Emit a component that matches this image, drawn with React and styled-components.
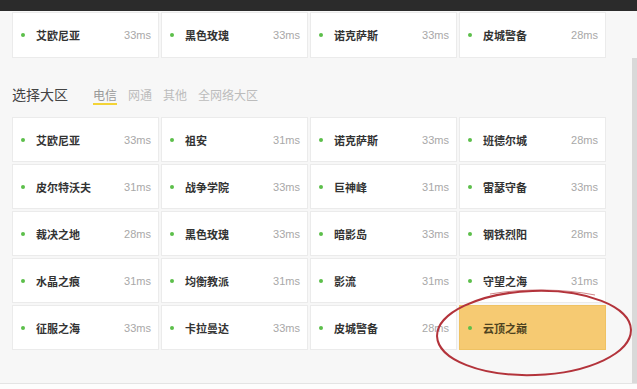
import React from "react";
import styled, { createGlobalStyle } from "styled-components";

const GlobalStyle = createGlobalStyle`
  html, body {
    margin: 0;
    padding: 0;
    background: #f7f7f7;
  }
  body {
    font-family: "Noto Sans CJK SC", "Noto Sans", sans-serif;
  }
`;

const Page = styled.div`
  position: relative;
  width: 637px;
  height: 389px;
  display: flex;
  flex-direction: column;
  overflow: hidden;
  background: #f7f7f7;
`;

const TopBar = styled.div`
  height: 11px;
  flex: none;
  background: #2b2b2b;
`;

const Main = styled.div`
  flex: 1;
  display: flex;
  min-height: 0;
`;

const Content = styled.div`
  flex: 1;
  padding: 1px 0 0 12px;
`;

const Track = styled.div`
  width: 5px;
  margin-top: 47px;
  background: #d9d9d9;
`;

const Footer = styled.div`
  height: 5px;
  flex: none;
  border-top: 1px solid #e4e4e4;
  background: #fdfdfd;
`;

const Grid = styled.div`
  display: grid;
  grid-template-columns: repeat(4, 147px);
  grid-auto-rows: ${(p) => p.$rowHeight}px;
  column-gap: 2px;
  row-gap: 2px;
`;

const Heading = styled.div`
  display: flex;
  align-items: baseline;
  margin: 26px 0 13px;
  height: 20px;
`;

const Title = styled.span`
  font-size: 14px;
  line-height: 20px;
  color: #444;
  margin-right: 25px;
`;

const Tab = styled.span`
  position: relative;
  font-size: 12px;
  line-height: 18px;
  margin-right: 11px;
  color: ${(p) => (p.$active ? "#999" : "#bcbcbc")};
  &::after {
    content: "";
    display: ${(p) => (p.$active ? "block" : "none")};
    position: absolute;
    left: 0;
    right: 0;
    bottom: -1px;
    height: 2px;
    background: #f3d336;
  }
`;

const Card = styled.div`
  display: flex;
  align-items: center;
  padding: 0 7px 0 8px;
  background: ${(p) => (p.$selected ? "#f6ca72" : "#fff")};
  border: 1px solid ${(p) => (p.$selected ? "#efc263" : "#ebebeb")};
`;

const Dot = styled.span`
  width: 4px;
  height: 4px;
  border-radius: 50%;
  background: #5cbf4a;
  flex: none;
`;

const Name = styled.span`
  flex: 1;
  margin-left: 11px;
  font-size: 11px;
  font-weight: 600;
  color: ${(p) => (p.$selected ? "#4e4220" : "#333")};
  white-space: nowrap;
`;

const Ping = styled.span`
  font-family: "Liberation Sans", Arial, sans-serif;
  font-size: 11px;
  color: #a8a8a8;
`;

const Ring = styled.svg`
  position: absolute;
  left: 430px;
  top: 285px;
  pointer-events: none;
`;

const recent = [
  ["艾欧尼亚", 33],
  ["黑色玫瑰", 33],
  ["诺克萨斯", 33],
  ["皮城警备", 28],
];

const servers = [
  ["艾欧尼亚", 33],
  ["祖安", 31],
  ["诺克萨斯", 33],
  ["班德尔城", 28],
  ["皮尔特沃夫", 31],
  ["战争学院", 33],
  ["巨神峰", 31],
  ["雷瑟守备", 33],
  ["裁决之地", 28],
  ["黑色玫瑰", 33],
  ["暗影岛", 33],
  ["钢铁烈阳", 28],
  ["水晶之痕", 31],
  ["均衡教派", 31],
  ["影流", 31],
  ["守望之海", 31],
  ["征服之海", 33],
  ["卡拉曼达", 33],
  ["皮城警备", 28],
  ["云顶之巅", null],
];

const tabs = ["电信", "网通", "其他", "全网络大区"];

function Server({ name, ms }) {
  const selected = ms === null;
  return (
    <Card $selected={selected}>
      <Dot />
      <Name $selected={selected}>{name}</Name>
      {!selected && <Ping>{ms}ms</Ping>}
    </Card>
  );
}

export default function App() {
  return (
    <Page>
      <GlobalStyle />
      <TopBar />
      <Main>
        <Content>
          <Grid $rowHeight={46}>
            {recent.map(([n, ms], i) => (
              <Server key={i} name={n} ms={ms} />
            ))}
          </Grid>
          <Heading>
            <Title>选择大区</Title>
            {tabs.map((t, i) => (
              <Tab key={t} $active={i === 0}>
                {t}
              </Tab>
            ))}
          </Heading>
          <Grid $rowHeight={45}>
            {servers.map(([n, ms], i) => (
              <Server key={i} name={n} ms={ms} />
            ))}
          </Grid>
        </Content>
        <Track />
      </Main>
      <Footer />
      <Ring width="210" height="100" viewBox="0 0 210 100">
        <ellipse
          cx="104"
          cy="48"
          rx="97"
          ry="42"
          fill="none"
          stroke="#b3333b"
          strokeWidth="2"
          transform="rotate(-2 104 48)"
        />
        <path
          d="M60 9 C 95 3, 135 4, 165 10"
          fill="none"
          stroke="#b3333b"
          strokeWidth="1"
          opacity="0.6"
        />
      </Ring>
    </Page>
  );
}
